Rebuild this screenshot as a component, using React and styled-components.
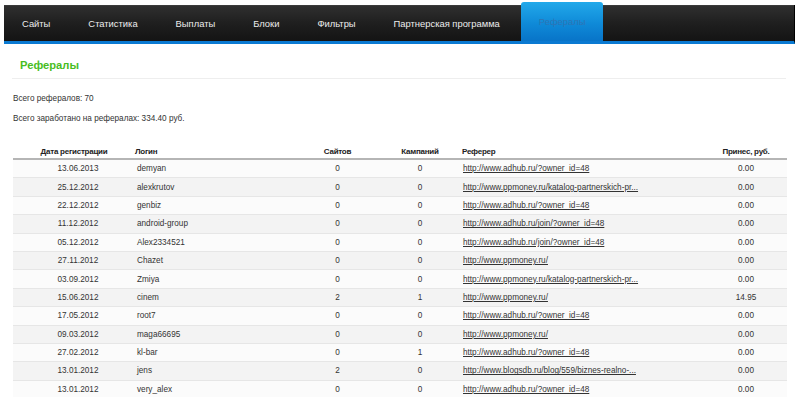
import React from "react";
import styled, { createGlobalStyle } from "styled-components";

const Global = createGlobalStyle`
  html, body { margin: 0; padding: 0; background: #fff; }
  body { font-family: "Liberation Sans", Arial, sans-serif; color: #333; }
`;

const Page = styled.div`
  width: 800px;
  height: 397px;
  overflow: hidden;
  box-sizing: border-box;
  padding: 5px 5px 0 4px;
`;

const Nav = styled.nav`
  display: flex;
  align-items: stretch;
  height: 36px;
  background: linear-gradient(#303030, #1f1f1f 50%, #141414);
  border-bottom: 3px solid #0a7ad2;
  border-right: 1px solid #000;
  box-shadow: inset 0 1px 0 #3a3a3a;
`;

const NavItem = styled.a`
  display: flex;
  align-items: center;
  padding-left: ${(p) => (p.$first ? "18px" : "19px")};
  padding-right: 19px;
  font-size: 9.4px;
  color: ${(p) => (p.$active ? "#2d74b4" : "#ececec")};
  text-decoration: none;
  white-space: nowrap;
  ${(p) =>
    p.$active &&
    `
    margin-top: -3px;
    margin-left: 2px;
    padding-left: 18px;
    padding-right: 18px;
    border-radius: 3px 3px 0 0;
    background: linear-gradient(#22a9ea, #0f8ad8 55%, #0874c8);
  `}
`;

const Content = styled.div`
  padding: 0 9px 0 9px;
`;

const Title = styled.h1`
  margin: 13px 0 0 -1px;
  padding: 0 0 5px 8px;
  font-size: 11.2px;
  line-height: 16px;
  font-weight: bold;
  color: #48bd1f;
  border-bottom: 1px solid #eeeeee;
`;

const Info = styled.p`
  margin: ${(p) => p.$top}px 0 0 0;
  font-size: 8.2px;
  line-height: 12px;
  color: #333;
`;

const Table = styled.table`
  margin-top: 19px;
  width: 774px;
  border-collapse: collapse;
  table-layout: fixed;
  font-size: 8.2px;
  color: #333;
`;

const Th = styled.th`
  height: 14px;
  padding: 0 0 0 ${(p) => p.$pl || 0}px;
  font-weight: bold;
  font-size: 8px;
  letter-spacing: -0.25px;
  color: #222;
  text-align: ${(p) => p.$align || "center"};
  border-bottom: 2px solid #b5b5b5;
  vertical-align: middle;
`;

const Tr = styled.tr`
  background: ${(p) => (p.$alt ? "#f3f3f3" : "#fbfbfb")};
`;

const Td = styled.td`
  height: 17.4px;
  padding: 0 0 0 ${(p) => p.$pl || 0}px;
  text-align: ${(p) => p.$align || "center"};
  border-bottom: 1px solid #e6e6e6;
  white-space: nowrap;
  overflow: hidden;
  vertical-align: middle;
`;

const Link = styled.a`
  color: #333;
  text-decoration: underline;
`;

const navItems = [
  "Сайты",
  "Статистика",
  "Выплаты",
  "Блоки",
  "Фильтры",
  "Партнерская программа",
  "Рефералы",
];

const rows = [
  ["13.06.2013", "demyan", 0, 0, "http://www.adhub.ru/?owner_id=48", "0.00"],
  ["25.12.2012", "alexkrutov", 0, 0, "http://www.ppmoney.ru/katalog-partnerskich-pr...", "0.00"],
  ["22.12.2012", "genbiz", 0, 0, "http://www.adhub.ru/?owner_id=48", "0.00"],
  ["11.12.2012", "android-group", 0, 0, "http://www.adhub.ru/join/?owner_id=48", "0.00"],
  ["05.12.2012", "Alex2334521", 0, 0, "http://www.adhub.ru/join/?owner_id=48", "0.00"],
  ["27.11.2012", "Chazet", 0, 0, "http://www.ppmoney.ru/", "0.00"],
  ["03.09.2012", "Zmiya", 0, 0, "http://www.ppmoney.ru/katalog-partnerskich-pr...", "0.00"],
  ["15.06.2012", "cinem", 2, 1, "http://www.ppmoney.ru/", "14.95"],
  ["17.05.2012", "root7", 0, 0, "http://www.adhub.ru/?owner_id=48", "0.00"],
  ["09.03.2012", "maga66695", 0, 0, "http://www.ppmoney.ru/", "0.00"],
  ["27.02.2012", "kl-bar", 0, 1, "http://www.adhub.ru/?owner_id=48", "0.00"],
  ["13.01.2012", "jens", 2, 0, "http://www.blogsdb.ru/blog/559/biznes-realno-...", "0.00"],
  ["13.01.2012", "very_alex", 0, 0, "http://www.adhub.ru/?owner_id=48", "0.00"],
];

export default function App() {
  return (
    <Page>
      <Global />
      <Nav>
        {navItems.map((n, i) => (
          <NavItem
            key={n}
            href="#"
            $first={i === 0}
            $active={i === navItems.length - 1}
          >
            {n}
          </NavItem>
        ))}
      </Nav>
      <Content>
        <Title>Рефералы</Title>
        <Info $top={14}>Всего рефералов: 70</Info>
        <Info $top={8}>Всего заработано на рефералах: 334.40 руб.</Info>
        <Table>
          <colgroup>
            <col style={{ width: 122 }} />
            <col style={{ width: 155 }} />
            <col style={{ width: 95 }} />
            <col style={{ width: 70 }} />
            <col style={{ width: 250 }} />
            <col style={{ width: 82 }} />
          </colgroup>
          <thead>
            <tr>
              <Th>Дата регистрации</Th>
              <Th $align="left">Логин</Th>
              <Th>Сайтов</Th>
              <Th>Кампаний</Th>
              <Th $align="left" $pl={7}>Реферер</Th>
              <Th>Принес, руб.</Th>
            </tr>
          </thead>
          <tbody>
            {rows.map((r, i) => (
              <Tr key={i} $alt={i % 2 === 1}>
                <Td $pl={8}>{r[0]}</Td>
                <Td $align="left" $pl={2}>{r[1]}</Td>
                <Td>{r[2]}</Td>
                <Td>{r[3]}</Td>
                <Td $align="left" $pl={8}>
                  <Link href="#">{r[4]}</Link>
                </Td>
                <Td>{r[5]}</Td>
              </Tr>
            ))}
          </tbody>
        </Table>
      </Content>
    </Page>
  );
}
